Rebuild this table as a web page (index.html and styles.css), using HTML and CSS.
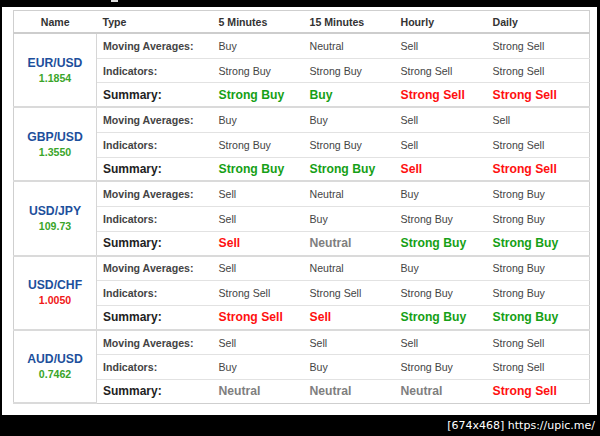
FILE: index.html
```html
<!DOCTYPE html>
<html>
<head>
<meta charset="utf-8">
<link rel="stylesheet" href="styles.css">
</head>
<body>
<div class="topbar"><span class="mark"></span></div>
<div class="frame">
<table class="tech">
<colgroup>
<col class="c-name"><col class="c-type"><col class="c-5m"><col class="c-15m"><col class="c-h"><col class="c-d">
</colgroup>
<thead>
<tr><th class="name-h">Name</th><th>Type</th><th>5 Minutes</th><th>15 Minutes</th><th>Hourly</th><th>Daily</th></tr>
</thead>
<tbody>
<tr class="r1"><td class="pair" rowspan="3"><div class="sym">EUR/USD</div><div class="px up">1.1854</div></td><td class="lbl">Moving Averages:</td><td>Buy</td><td>Neutral</td><td>Sell</td><td>Strong Sell</td></tr>
<tr class="r2"><td class="lbl">Indicators:</td><td>Strong Buy</td><td>Strong Buy</td><td>Strong Sell</td><td>Strong Sell</td></tr>
<tr class="r3"><td class="sum">Summary:</td><td class="v g">Strong Buy</td><td class="v g">Buy</td><td class="v r">Strong Sell</td><td class="v r">Strong Sell</td></tr>

<tr class="r1"><td class="pair" rowspan="3"><div class="sym">GBP/USD</div><div class="px up">1.3550</div></td><td class="lbl">Moving Averages:</td><td>Buy</td><td>Buy</td><td>Sell</td><td>Sell</td></tr>
<tr class="r2"><td class="lbl">Indicators:</td><td>Strong Buy</td><td>Strong Buy</td><td>Sell</td><td>Strong Sell</td></tr>
<tr class="r3"><td class="sum">Summary:</td><td class="v g">Strong Buy</td><td class="v g">Strong Buy</td><td class="v r">Sell</td><td class="v r">Strong Sell</td></tr>

<tr class="r1"><td class="pair" rowspan="3"><div class="sym">USD/JPY</div><div class="px up">109.73</div></td><td class="lbl">Moving Averages:</td><td>Sell</td><td>Neutral</td><td>Buy</td><td>Strong Buy</td></tr>
<tr class="r2"><td class="lbl">Indicators:</td><td>Sell</td><td>Buy</td><td>Strong Buy</td><td>Strong Buy</td></tr>
<tr class="r3"><td class="sum">Summary:</td><td class="v r">Sell</td><td class="v n">Neutral</td><td class="v g">Strong Buy</td><td class="v g">Strong Buy</td></tr>

<tr class="r1"><td class="pair" rowspan="3"><div class="sym">USD/CHF</div><div class="px down">1.0050</div></td><td class="lbl">Moving Averages:</td><td>Sell</td><td>Neutral</td><td>Buy</td><td>Strong Buy</td></tr>
<tr class="r2"><td class="lbl">Indicators:</td><td>Strong Sell</td><td>Strong Sell</td><td>Strong Buy</td><td>Strong Buy</td></tr>
<tr class="r3"><td class="sum">Summary:</td><td class="v r">Strong Sell</td><td class="v r">Sell</td><td class="v g">Strong Buy</td><td class="v g">Strong Buy</td></tr>

<tr class="r1"><td class="pair" rowspan="3"><div class="sym">AUD/USD</div><div class="px up">0.7462</div></td><td class="lbl">Moving Averages:</td><td>Sell</td><td>Sell</td><td>Sell</td><td>Strong Sell</td></tr>
<tr class="r2"><td class="lbl">Indicators:</td><td>Buy</td><td>Buy</td><td>Strong Buy</td><td>Strong Sell</td></tr>
<tr class="r3 last"><td class="sum">Summary:</td><td class="v n">Neutral</td><td class="v n">Neutral</td><td class="v n">Neutral</td><td class="v r">Strong Sell</td></tr>
</tbody>
</table>
</div>
<div class="footer"><span class="stamp">[674x468] https://upic.me/</span></div>
</body>
</html>
```
FILE: styles.css
```css
html, body {
  margin: 0;
  padding: 0;
  background: #000;
  width: 600px;
  height: 436px;
  overflow: hidden;
  font-family: "Liberation Sans", Arial, sans-serif;
}
.topbar {
  height: 7px;
}
.mark {
  display: block;
  width: 7px;
  height: 2px;
  margin-left: 111px;
  background: #ddd;
}
.frame {
  margin-left: 2px;
  width: 595px;
  height: 408px;
  background: #fff;
  padding: 3px 0 0 11px;
  box-sizing: border-box;
}
.tech {
  border-collapse: collapse;
  table-layout: fixed;
  width: 576px;
  border: 1px solid #cfcfcf;
  font-size: 10.6px;
  color: #444;
}
.c-name { width: 83px; }
.c-type { width: 116px; }
.c-5m { width: 91px; }
.c-15m { width: 91px; }
.c-h { width: 92px; }
.c-d { width: 103px; }
.tech th {
  height: 21px;
  padding: 0 0 0 6px;
  text-align: left;
  font-weight: bold;
  color: #333;
  border-bottom: 2px solid #cdcdcd;
}
.tech th.name-h {
  text-align: center;
  padding: 0;
}
.tech td {
  padding: 0 0 0 6px;
  height: 23.7px;
  white-space: nowrap;
  border-bottom: 1px solid #e2e2e2;
}
.tech tr.r3 td {
  height: 22.8px;
  border-bottom: 2px solid #dadada;
}
.tech tr.last td {
  border-bottom: 1px solid #cfcfcf;
}
.tech td.pair {
  padding: 0;
  text-align: center;
  border-right: 1px solid #d6d6d6;
  border-bottom: 2px solid #dadada;
}
.sym {
  font-weight: bold;
  font-size: 12.2px;
  color: #1d4f9c;
  line-height: 15px;
}
.px {
  font-weight: bold;
  font-size: 10.6px;
  line-height: 14px;
}
.px.up { color: #3aa52a; }
.px.down { color: #f01818; }
.lbl {
  font-weight: bold;
  color: #444;
}
.sum {
  font-weight: bold;
  font-size: 12px;
  color: #222;
}
.v {
  font-weight: bold;
  font-size: 12.2px;
}
.v.g { color: #16a016; }
.v.r { color: #ff1010; }
.v.n { color: #7f7f7f; }
.footer {
  height: 21px;
  text-align: right;
  padding-right: 5px;
}
.stamp {
  color: #fff;
  font-family: "DejaVu Sans", sans-serif;
  font-size: 11px;
  line-height: 20px;
}
```
